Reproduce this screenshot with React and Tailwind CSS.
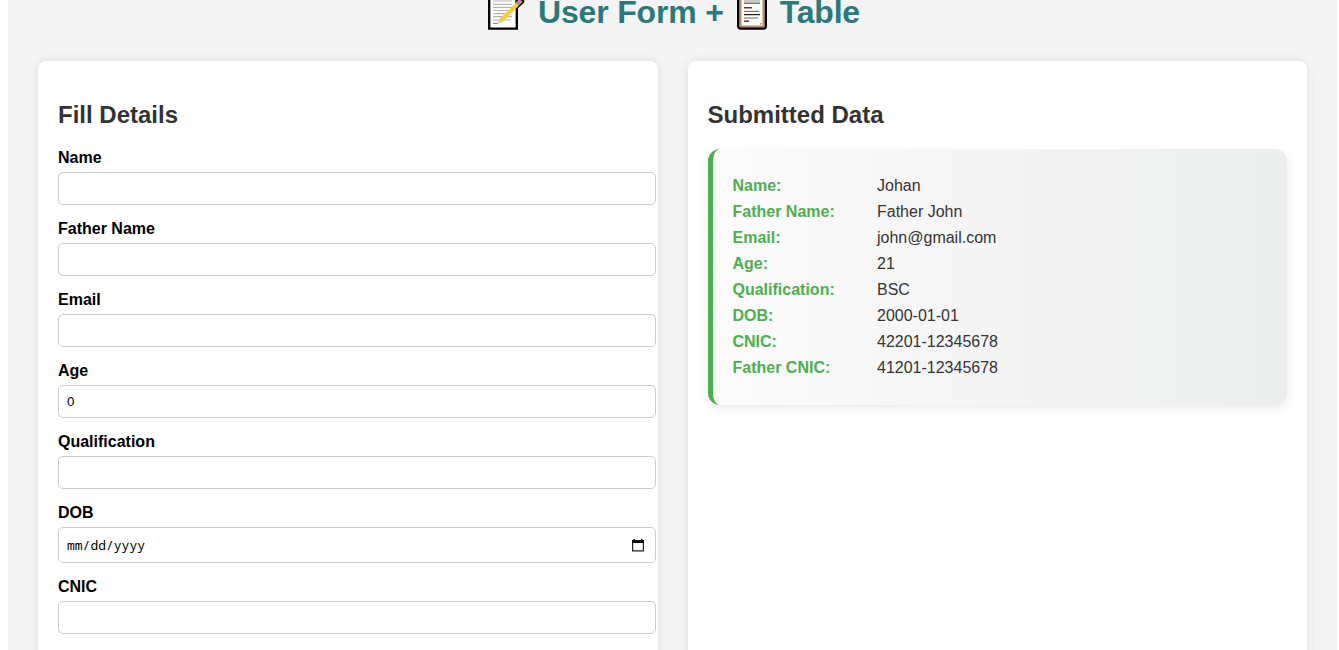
import React from "react";

const fields = [
  { label: "Name", value: "" },
  { label: "Father Name", value: "" },
  { label: "Email", value: "" },
  { label: "Age", value: "0" },
  { label: "Qualification", value: "" },
  { label: "DOB", date: true },
  { label: "CNIC", value: "" },
];

const rows = [
  ["Name:", "Johan"],
  ["Father Name:", "Father John"],
  ["Email:", "john@gmail.com"],
  ["Age:", "21"],
  ["Qualification:", "BSC"],
  ["DOB:", "2000-01-01"],
  ["CNIC:", "42201-12345678"],
  ["Father CNIC:", "41201-12345678"],
];

function MemoIcon() {
  return (
    <svg className="block shrink-0" width="38" height="38" viewBox="0 0 38 38">
      <path d="M1.2 1.2h27.6v34.4H1.2z" fill="#fff" stroke="#000" strokeWidth="2.400" />
      <path d="M5 8h19M5 11.300h19M5 14.400h19M5 17.500h19M5 20.600h15M5 23.700h19M5 27h18" stroke="#b4b4b4" strokeWidth="1.200" />
      <path d="M5 30.500h4.500l1.500-1.500" fill="none" stroke="#777" strokeWidth="0.900" />
      <path d="M27.500 13V7l5-4 3.800 3v3.500l-6 5.500z" fill="#111" />
      <path d="M11.400 26 28 9.500l3 3-16.500 16.500-4 1z" fill="#ffc83d" />
      <path d="m11.400 26-1.600 4.400 4.700-1.400z" fill="#f3c3a5" />
      <path d="m28 9.500 1.500-1.500 3 3-1.500 1.500z" fill="#9aa0a6" />
      <path d="m29.500 8 2-2 3 3-2 2z" fill="#e58a8a" />
    </svg>
  );
}

function ClipboardIcon() {
  return (
    <svg className="block shrink-0" width="30" height="38" viewBox="0 0 30 38">
      <rect x="1.100" y="2" width="27.800" height="33.700" rx="2.500" fill="#ba8f63" stroke="#000" strokeWidth="2.200" />
      <path d="M4.500 6h21v26.500h-21z" fill="#fff" />
      <path d="M7 4h16v6H7z" fill="#c9c9cf" />
      <path d="M7 10.400h16M7 18.300h15" stroke="#777" strokeWidth="1.300" />
      <path d="M7 14.800h8M7 28.300h5" stroke="#444" strokeWidth="1.500" />
      <path d="M7 21.600h16" stroke="#222" strokeWidth="1.300" />
      <path d="M7 25h14" stroke="#999" strokeWidth="1.500" />
      <path d="M23 32.500v-2.500h2.500z" fill="#c9a27b" />
    </svg>
  );
}

function CalendarIcon() {
  return (
    <svg className="block" width="12" height="13" viewBox="0 0 12 13">
      <path d="M0.600 2.500h10.800v9.400H0.600z" fill="none" stroke="#222" strokeWidth="1.200" />
      <path d="M0 1h12v3H0zM1.500 0h1.500v2H1.500zM9 0h1.500v2H9z" fill="#000" />
    </svg>
  );
}

export default function App() {
  return (
    <div className="h-[650px] overflow-hidden bg-white pl-2 pr-[2px] font-['Liberation_Sans',Arial,sans-serif] text-base text-black">
      <div className="h-full bg-[#f4f4f4] px-[30px]">
        <h1 className="flex h-[61px] items-start pl-[450px] text-[32px] leading-[37px] font-bold tracking-[-0.18px] whitespace-pre text-[#2a7a7b]">
          <span className="-mt-[7px]"><MemoIcon /></span>
          <span className="-mt-[6px] ml-3">User Form +</span>
          <span className="-mt-[7px] ml-[13px]"><ClipboardIcon /></span>
          <span className="-mt-[6px] ml-[13px]">Table</span>
        </h1>
        <div className="grid h-[900px] grid-cols-2 gap-[30px]">
          <section className="rounded-[8px] bg-white p-5 shadow-[0_0_10px_rgba(0,0,0,0.1)]">
            <h2 className="mt-5 mb-[21px] text-2xl leading-[27px] font-bold text-[#333]">Fill Details</h2>
            <form className="flex flex-col">
              {fields.map((f) => (
                <label key={f.label} className="mb-[15px] block">
                  <span className="mb-[5px] block leading-[18px] font-bold">{f.label}</span>
                  {f.date ? (
                    <span className="flex h-9 w-[597.5px] items-center justify-between rounded-[5px] border border-[#ccc] bg-white pr-[11px] pl-2 font-['Noto_Sans_Mono','DejaVu_Sans_Mono',monospace] text-[13px] leading-[18px]">
                      <span>mm/dd/yyyy</span>
                      <CalendarIcon />
                    </span>
                  ) : (
                    <input
                      defaultValue={f.value}
                      className="block h-[33px] w-[597.5px] rounded-[5px] border border-[#ccc] bg-white px-2 text-[13.333px]"
                    />
                  )}
                </label>
              ))}
            </form>
          </section>
          <section className="rounded-[8px] bg-white p-5 shadow-[0_0_10px_rgba(0,0,0,0.1)]">
            <h2 className="mt-5 mb-[21px] text-2xl leading-[27px] font-bold text-[#333]">Submitted Data</h2>
            <div className="h-[256px] rounded-[12px] border-l-[5px] border-[#4caf50] bg-[linear-gradient(to_right,#fdfbfb,#ebedee)] px-5 pt-6 shadow-[0_4px_10px_rgba(0,0,0,0.08)]">
              {rows.map(([k, v]) => (
                <div key={k} className="flex h-[26px] items-center text-[#333]">
                  <span className="w-[144.5px] font-bold text-[#4caf50]">{k}</span>
                  <span>{v}</span>
                </div>
              ))}
            </div>
          </section>
        </div>
      </div>
    </div>
  );
}
